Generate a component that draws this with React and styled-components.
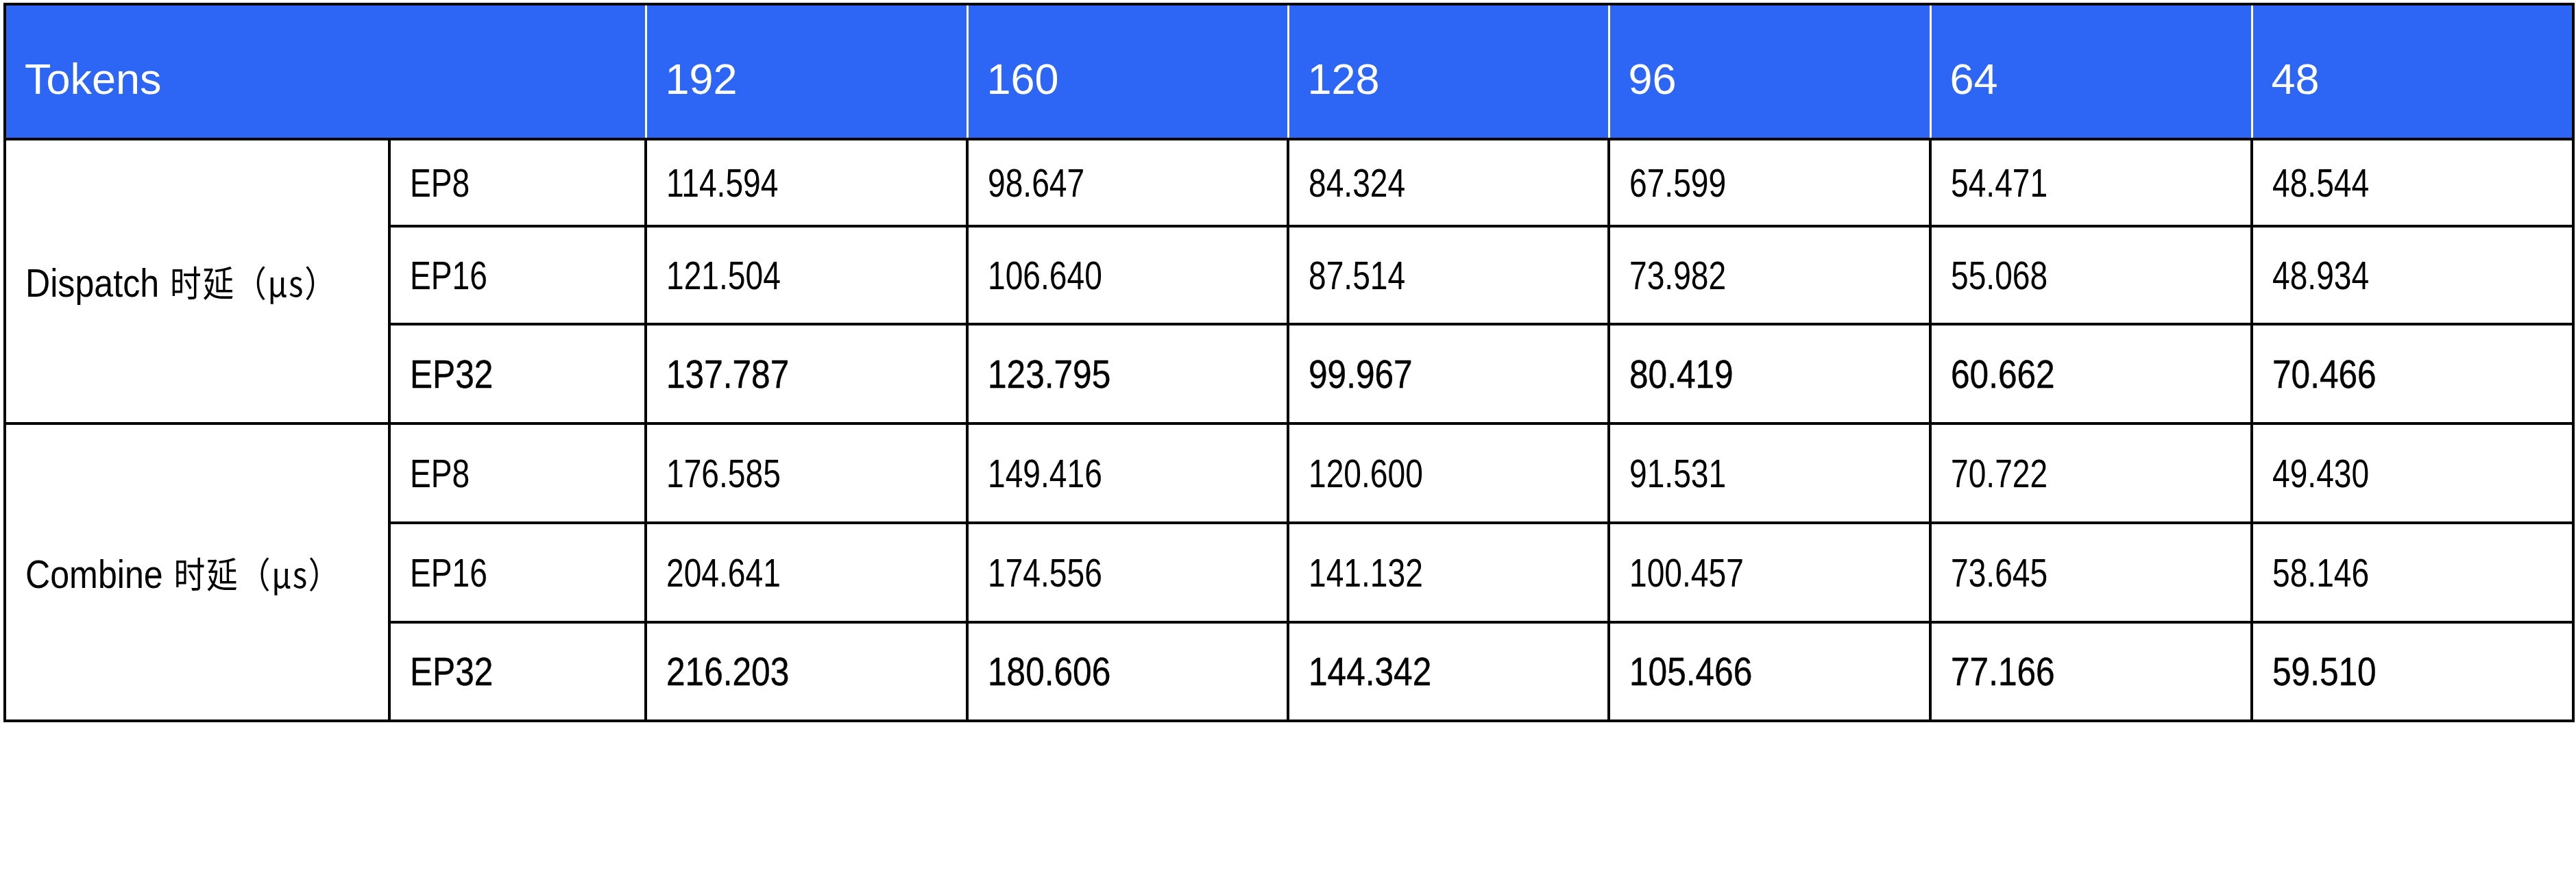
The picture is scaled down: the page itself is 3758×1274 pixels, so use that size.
import React from "react";
import styled, { createGlobalStyle } from "styled-components";

const GlobalStyle = createGlobalStyle`
  html, body {
    margin: 0;
    padding: 0;
    background: #ffffff;
  }
`;

const Page = styled.div`
  padding: 4px 0 0 5px;
`;

const Table = styled.table`
  width: 3751px;
  table-layout: fixed;
  border-collapse: collapse;
  border: 4px solid #000;
  font-family: "Liberation Sans", Arial, sans-serif;
  color: #000;
`;

const HeadRow = styled.tr`
  height: 197px;
`;

const Row = styled.tr`
  height: ${(p) => p.$h}px;
`;

const HeadCell = styled.th`
  background: #2d65f5;
  color: #fff;
  text-align: left;
  font-weight: 400;
  font-size: 63px;
  padding: 20px 27px 0;
  vertical-align: middle;
  border-left: 3px solid #fff;
  border-right: 3px solid #fff;
  border-top: 4px solid #000;
  border-bottom: 4px solid #000;
`;

const Cell = styled.td`
  border: 4px solid #000;
  font-size: 57px;
  padding: 0 28px;
  vertical-align: middle;
  white-space: nowrap;
  overflow: visible;
`;

// the source renders its figures narrower than Arial; the last EP row a bit wider and heavier
const Txt = styled.span`
  display: inline-block;
  transform: scaleX(${(p) => p.$scale || 0.81});
  transform-origin: left center;
  -webkit-text-stroke: ${(p) => (p.$strong ? "0.45px #000" : "0")};
`;

const Cjk = styled.span`
  font-family: "Noto Sans CJK SC", "Liberation Sans", sans-serif;
  font-size: 52px;
  letter-spacing: 2px;
  margin-left: 18px;
`;

const widths = [561, 374, 469, 468, 468, 469, 469, 469];
const tokens = [192, 160, 128, 96, 64, 48];

const groups = [
  {
    name: "Dispatch",
    rows: [
      ["EP8", "114.594", "98.647", "84.324", "67.599", "54.471", "48.544"],
      ["EP16", "121.504", "106.640", "87.514", "73.982", "55.068", "48.934"],
      ["EP32", "137.787", "123.795", "99.967", "80.419", "60.662", "70.466"],
    ],
  },
  {
    name: "Combine",
    rows: [
      ["EP8", "176.585", "149.416", "120.600", "91.531", "70.722", "49.430"],
      ["EP16", "204.641", "174.556", "141.132", "100.457", "73.645", "58.146"],
      ["EP32", "216.203", "180.606", "144.342", "105.466", "77.166", "59.510"],
    ],
  },
];

const heights = [
  [127, 143, 145],
  [145, 145, 144],
];

export default function App() {
  return (
    <Page>
      <GlobalStyle />
      <Table>
        <colgroup>
          {widths.map((w, i) => (
            <col key={i} style={{ width: w }} />
          ))}
        </colgroup>
        <thead>
          <HeadRow>
            <HeadCell colSpan={2}>Tokens</HeadCell>
            {tokens.map((t) => (
              <HeadCell key={t}>{t}</HeadCell>
            ))}
          </HeadRow>
        </thead>
        <tbody>
          {groups.map((g, gi) =>
            g.rows.map((r, ri) => (
              <Row key={g.name + r[0]} $h={heights[gi][ri]}>
                {ri === 0 && (
                  <Cell rowSpan={3}>
                    <Txt $scale={0.88}>
                      {g.name}
                      <Cjk>时延（μs）</Cjk>
                    </Txt>
                  </Cell>
                )}
                {r.map((v, vi) => (
                  <Cell key={vi}>
                    <Txt $strong={ri === 2} $scale={ri === 2 ? 0.87 : 0.81}>
                      {v}
                    </Txt>
                  </Cell>
                ))}
              </Row>
            ))
          )}
        </tbody>
      </Table>
    </Page>
  );
}
